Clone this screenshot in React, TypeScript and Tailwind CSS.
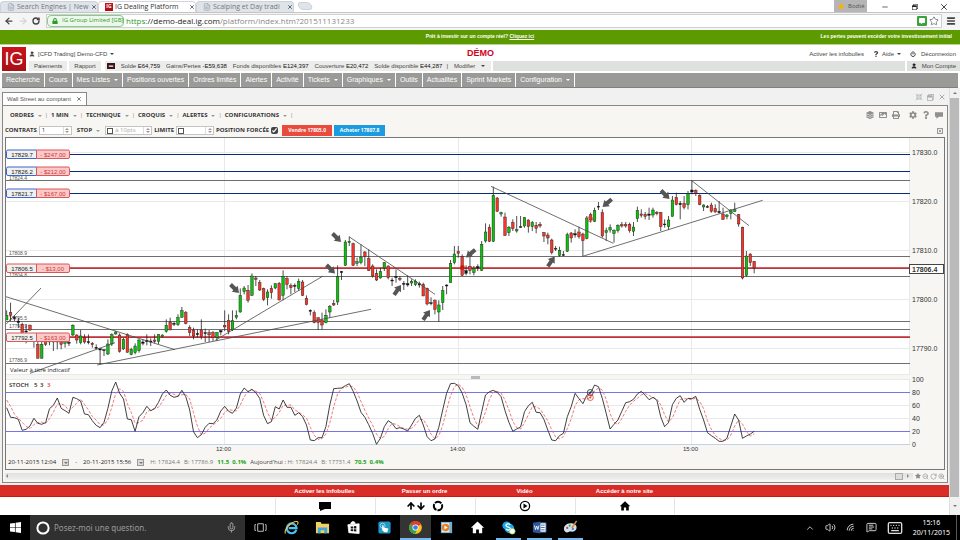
import type { ReactNode } from "react";
import {
  AlertTriangle,
  ArrowDown,
  ArrowLeft,
  ArrowRight,
  ArrowUp,
  ChevronUp,
  FileText,
  Keyboard,
  Menu,
  MessageSquareText,
  Mic,
  Minus,
  Power,
  RotateCw,
  Shrink,
  Star,
  User,
  Volume2,
  Wifi,
  X,
  ZoomIn,
  ZoomOut,
} from "lucide-react";
import { FaCog, FaCommentAlt, FaImage, FaLayerGroup, FaLock, FaPrint, FaQuestion, FaRegWindowRestore } from "react-icons/fa";

type Candle = [high: number, open: number, close: number, low: number, kind: "g" | "r" | "k"];

// One candle per minute, vertical positions in thirds of a pixel from the top of the plot.
const STEP = 11.68;
const FIRST_X = 2;

const candles: Candle[] = [
  [517, 532, 546, 546, "g"], [494, 524, 532, 549, "r"], [532, 538, 542, 549, "k"], [539, 549, 554, 569, "k"],
  [554, 559, 586, 589, "r"], [559, 579, 582, 616, "k"], [561, 561, 576, 579, "r"], [589, 604, 609, 629, "k"],
  [604, 619, 661, 661, "r"], [604, 619, 661, 661, "g"], [604, 609, 619, 624, "r"], [604, 608, 612, 622, "k"],
  [604, 609, 612, 639, "k"], [599, 609, 612, 634, "k"], [604, 609, 619, 634, "r"], [599, 610, 616, 629, "g"],
  [594, 613, 616, 624, "k"], [559, 562, 591, 594, "g"], [589, 591, 606, 617, "r"], [576, 594, 614, 619, "g"],
  [589, 598, 612, 617, "r"], [589, 611, 614, 619, "k"], [612, 616, 620, 629, "r"], [619, 628, 631, 634, "k"],
  [632, 632, 636, 679, "k"], [634, 635, 638, 654, "k"], [604, 618, 648, 651, "g"], [586, 590, 618, 624, "g"],
  [579, 582, 588, 590, "g"], [586, 591, 640, 644, "r"], [599, 604, 633, 636, "g"], [586, 590, 643, 644, "r"],
  [629, 634, 650, 652, "g"], [616, 624, 644, 649, "g"], [604, 606, 638, 644, "g"], [604, 612, 616, 622, "k"],
  [589, 607, 611, 622, "k"], [601, 609, 612, 624, "k"], [589, 606, 610, 616, "r"], [589, 590, 610, 618, "g"],
  [589, 591, 596, 599, "g"], [544, 562, 580, 584, "g"], [539, 552, 576, 576, "r"], [551, 556, 559, 564, "k"],
  [529, 539, 560, 564, "g"], [507, 518, 538, 539, "g"], [519, 524, 557, 559, "r"], [562, 569, 584, 594, "r"],
  [569, 576, 594, 604, "r"], [574, 586, 590, 599, "k"], [544, 576, 596, 604, "r"], [572, 584, 587, 612, "k"],
  [576, 584, 591, 612, "r"], [579, 584, 599, 609, "r"], [582, 584, 598, 609, "g"], [576, 578, 582, 592, "k"],
  [517, 562, 567, 579, "r"], [529, 548, 580, 589, "r"], [517, 548, 576, 579, "g"], [517, 532, 538, 544, "g"],
  [451, 472, 522, 524, "g"], [444, 450, 461, 469, "g"], [441, 457, 487, 494, "r"], [406, 414, 472, 474, "g"],
  [414, 420, 424, 444, "r"], [426, 434, 456, 459, "r"], [449, 452, 484, 489, "r"], [454, 462, 479, 502, "g"],
  [442, 451, 464, 482, "r"], [436, 437, 450, 454, "g"], [432, 436, 486, 487, "r"], [397, 415, 472, 487, "g"],
  [414, 422, 439, 454, "r"], [436, 442, 449, 469, "r"], [436, 442, 445, 462, "k"], [422, 430, 451, 459, "g"],
  [426, 432, 472, 474, "r"], [472, 481, 500, 502, "r"], [514, 517, 520, 532, "k"], [517, 524, 554, 556, "r"],
  [539, 539, 554, 576, "r"], [524, 546, 561, 574, "r"], [514, 532, 554, 556, "g"], [501, 505, 522, 539, "g"],
  [486, 496, 501, 504, "r"], [382, 416, 492, 501, "g"], [399, 400, 404, 426, "k"], [306, 312, 382, 384, "g"],
  [296, 310, 314, 324, "g"], [314, 317, 382, 384, "r"], [359, 371, 376, 384, "g"], [319, 358, 374, 379, "g"],
  [339, 342, 356, 384, "r"], [334, 362, 398, 399, "r"], [379, 384, 414, 419, "r"], [394, 407, 426, 429, "r"],
  [389, 400, 420, 422, "g"], [372, 374, 390, 399, "g"], [382, 384, 419, 424, "r"], [419, 426, 429, 444, "k"],
  [394, 415, 419, 434, "k"], [414, 421, 424, 429, "r"], [429, 436, 439, 456, "k"], [412, 437, 441, 446, "k"],
  [424, 431, 435, 444, "g"], [424, 430, 440, 444, "g"], [431, 437, 441, 449, "k"], [434, 439, 474, 474, "r"],
  [449, 451, 498, 502, "r"], [478, 494, 497, 502, "k"], [484, 488, 514, 529, "r"], [487, 501, 522, 552, "g"],
  [444, 458, 494, 516, "g"], [439, 441, 444, 469, "k"], [366, 376, 434, 434, "g"], [324, 348, 374, 379, "g"],
  [324, 341, 346, 359, "r"], [349, 356, 412, 414, "r"], [382, 398, 406, 412, "k"], [349, 385, 397, 409, "r"],
  [384, 391, 404, 412, "g"], [379, 386, 390, 399, "k"], [309, 319, 397, 399, "g"], [256, 282, 309, 314, "g"],
  [259, 268, 310, 312, "r"], [146, 172, 310, 312, "g"], [177, 180, 220, 222, "r"], [221, 224, 228, 236, "g"],
  [224, 237, 292, 294, "r"], [264, 268, 284, 294, "g"], [244, 254, 272, 279, "r"], [234, 275, 279, 284, "g"],
  [234, 266, 268, 269, "k"], [237, 239, 264, 269, "g"], [244, 246, 266, 284, "r"], [249, 254, 266, 279, "g"],
  [252, 262, 271, 286, "r"], [252, 259, 264, 269, "r"], [282, 284, 294, 312, "r"], [284, 291, 300, 319, "r"],
  [302, 306, 344, 349, "r"], [324, 331, 333, 339, "k"], [326, 337, 352, 356, "g"], [339, 350, 352, 354, "k"],
  [284, 290, 340, 342, "g"], [282, 285, 300, 314, "r"], [274, 287, 291, 299, "k"], [266, 282, 296, 302, "r"],
  [284, 288, 308, 354, "r"], [234, 240, 302, 304, "g"], [224, 230, 246, 254, "r"], [209, 218, 250, 252, "g"],
  [192, 205, 207, 216, "k"], [214, 224, 294, 299, "r"], [269, 278, 284, 309, "g"], [259, 269, 276, 284, "g"],
  [274, 277, 287, 314, "g"], [259, 262, 278, 284, "g"], [252, 260, 264, 269, "r"], [252, 260, 264, 269, "r"],
  [254, 259, 278, 284, "r"], [252, 267, 280, 294, "g"], [206, 217, 242, 252, "g"], [214, 228, 232, 239, "r"],
  [222, 229, 235, 244, "r"], [209, 228, 232, 246, "k"], [209, 216, 231, 239, "g"], [219, 223, 227, 232, "r"],
  [222, 224, 266, 279, "r"], [244, 258, 260, 269, "k"], [234, 246, 266, 276, "g"], [174, 186, 235, 236, "g"],
  [164, 178, 200, 202, "r"], [189, 196, 200, 244, "k"], [174, 196, 208, 214, "r"], [159, 167, 200, 214, "g"],
  [127, 156, 162, 169, "k"], [154, 157, 166, 174, "r"], [169, 172, 200, 202, "r"], [199, 201, 207, 219, "g"],
  [201, 206, 208, 209, "k"], [194, 201, 220, 224, "r"], [199, 212, 222, 224, "r"], [189, 220, 224, 226, "k"],
  [209, 228, 244, 246, "r"], [228, 231, 236, 244, "g"], [214, 216, 226, 244, "g"], [194, 215, 221, 222, "g"],
  [228, 230, 258, 266, "r"], [266, 268, 420, 424, "r"], [339, 354, 412, 416, "g"], [346, 348, 374, 384, "r"],
  [369, 370, 390, 406, "r"],
];

const stoch = [
  113, 142, 143, 148, 181, 178, 168, 145, 160, 163, 158, 116, 106, 84, 115, 122, 130, 82, 86, 93,
  132, 134, 152, 166, 173, 157, 115, 63, 36, 70, 87, 147, 149, 184, 140, 128, 109, 122, 116, 97,
  72, 60, 76, 82, 79, 61, 80, 120, 185, 203, 194, 172, 160, 161, 150, 123, 109, 124, 130, 114,
  72, 54, 65, 58, 68, 85, 136, 161, 155, 110, 117, 90, 112, 112, 136, 128, 140, 165, 210, 212,
  203, 203, 170, 105, 56, 55, 54, 47, 41, 64, 93, 127, 142, 164, 190, 223, 205, 170, 152, 160,
  176, 173, 177, 183, 165, 145, 136, 165, 200, 212, 207, 172, 120, 70, 41, 40, 47, 70, 104, 158,
  169, 178, 125, 75, 65, 61, 67, 80, 122, 157, 184, 177, 171, 125, 107, 97, 127, 128, 148, 180,
  210, 212, 197, 190, 140, 110, 70, 86, 101, 76, 68, 45, 50, 85, 130, 177, 163, 150, 124, 98,
  95, 88, 72, 64, 76, 89, 82, 91, 140, 170, 158, 104, 85, 77, 97, 85, 86, 79, 118, 150,
  188, 197, 205, 214, 214, 205, 168, 132, 150, 205, 198, 192, 184,
];

const signal = stoch.map((v, i) => (v + (stoch[i - 1] ?? 85) + (stoch[i - 2] ?? 72)) / 3);

const toPoints = (values: number[]) =>
  values.map((v, i) => `${((FIRST_X + i * STEP) / 3).toFixed(1)},${(v / 3 + 232).toFixed(1)}`).join(" ");

const trendLines = [
  [0, 158.7, 169, 211.7],
  [91, 227, 365, 171.3],
  [0, 186.3, 35, 150],
  [24, 235.3, 109, 204.7],
  [209.3, 202.3, 317, 138],
  [343, 98.7, 429, 156.3],
  [485, 48.3, 607.3, 105.3],
  [576.7, 118.3, 756.7, 62.3],
  [685.3, 42.3, 743, 87.7],
];

const arrows = [
  [233, 155, 45], [335, 104, 45], [329, 135.5, 45], [663.5, 61, 45],
  [395, 147, -55], [424, 172, -55], [548.7, 118.5, -55],
  [460, 119.5, 140], [596.5, 69, 140],
];

const positions = [
  { y: 16, price: "17829.7", pnl: "- $247,00", buy: true },
  { y: 33, price: "17826.2", pnl: "- $212,00", buy: true },
  { y: 55, price: "17821.7", pnl: "- $167,00", buy: true },
  { y: 130, price: "17806.5", pnl: "- $13,00", buy: false },
  { y: 199, price: "17792.5", pnl: "- $163,00", buy: false },
];

const levels = [
  { y: 42.5, label: "17824.4", ly: 42 },
  { y: 118.5, label: "17808.9", ly: 117 },
  { y: 138.5, label: "17804.8", ly: 139 },
  { y: 183.5, label: "17795.5", ly: 182 },
  { y: 191.5, label: "17793.9", ly: 190 },
  { y: 225.5, label: "17786.9", ly: 224 },
];

const priceTicks = [
  { y: 14.5, label: "17830.0" },
  { y: 63.5, label: "17820.0" },
  { y: 112.5, label: "17810.0" },
  { y: 161.5, label: "17800.0" },
  { y: 210.5, label: "17790.0" },
];

const stochTicks = [
  { y: 241.5, label: "100" },
  { y: 254.5, label: "80" },
  { y: 267.5, label: "60" },
  { y: 280.5, label: "40" },
  { y: 293.5, label: "20" },
  { y: 306.5, label: "0" },
];

const timeTicks = [
  { x: 218.5, label: "12:00" },
  { x: 452.5, label: "14:00" },
  { x: 685.5, label: "15:00" },
];

const candleFill = { g: "#0cc00c", r: "#f5362a", k: "#111111" };

const Chart = () => (
  <svg viewBox="0 0 938 316" className="block w-full bg-[#f7f6f3] font-['Liberation_Sans',sans-serif]">
    <rect width="904" height="236.5" fill="#fff" />
    <rect y="241.5" width="904" height="65" fill="#fff" />
    <g stroke="#e9e9e9">
      {priceTicks.map((t) => <line key={t.label} x1="0" x2="904" y1={t.y} y2={t.y} />)}
      {stochTicks.map((t) => <line key={t.label} x1="0" x2="904" y1={t.y} y2={t.y} />)}
      {timeTicks.map((t) => <path key={t.label} d={`M${t.x} 0V236M${t.x} 242V306`} />)}
      <path d="M0 236.5H904M903.5 0V236M903.5 242V306" />
    </g>
    <rect x="465" y="238" width="9" height="3" fill="#b9b9b9" />

    <g fontSize="5" fill="#555">
      {levels.map((l) => <text key={l.label} x="3" y={l.ly}>{l.label}</text>)}
    </g>
    <g stroke="#6f6f6f">
      {levels.map((l) => <line key={l.label} x1="0" x2="904" y1={l.y} y2={l.y} />)}
    </g>
    {positions.map((p) => (
      <g key={p.price}>
        <line x1="0" x2="904" y1={p.buy ? p.y + 0.5 : p.y} y2={p.buy ? p.y + 0.5 : p.y} stroke={p.buy ? "#0a2a7c" : "#de5a5f"} strokeWidth={p.buy ? 1 : 2} />
        {!p.buy && <line x1="0" x2="904" y1={p.y + 0.5} y2={p.y + 0.5} stroke="#94232a" strokeOpacity="0.6" />}
      </g>
    ))}

    {/* candles */}
    <g>
      {candles.map(([high, open, close, low, kind], i) => {
        const x = (FIRST_X + i * STEP) / 3;
        return (
          <g key={i}>
            <line x1={x} x2={x} y1={high / 3} y2={low / 3} stroke="#222" strokeWidth="0.8" />
            <rect x={x - 1.3} y={open / 3} width="2.6" height={Math.max((close - open) / 3, 0.8)} fill={candleFill[kind]} stroke="#1a1a1a" strokeWidth="0.4" />
          </g>
        );
      })}
    </g>
    <rect x="454.5" y="127.5" width="4" height="4" fill="#d21313" />
    <circle cx="584" cy="81" r="2.5" fill="none" stroke="#e8352b" strokeWidth="0.8" />

    <g stroke="#4a4a4a" strokeWidth="0.8">
      {trendLines.map(([x1, y1, x2, y2], i) => <line key={i} x1={x1} y1={y1} x2={x2} y2={y2} />)}
    </g>
    {arrows.map(([x, y, angle], i) => (
      <path key={i} d="M0 0 L-6 -4.2 V-2 H-12 V2 H-6 V4.2Z" fill="#555" transform={`translate(${x} ${y}) rotate(${angle})`} />
    ))}

    {positions.map((p) => (
      <g key={p.price} fontSize="6" textAnchor="middle">
        <path d={`M2 ${p.y - 4}H30.5V${p.y + 4.5}H2Q0.5 ${p.y + 4.5} 0.5 ${p.y + 3}V${p.y - 2.5}Q0.5 ${p.y - 4} 2 ${p.y - 4}Z`} fill="#f0f0ef" stroke={p.buy ? "#3d63d2" : "#e0565a"} />
        <path d={`M30.5 ${p.y - 4}H62Q63.5 ${p.y - 4} 63.5 ${p.y - 2.5}V${p.y + 3}Q63.5 ${p.y + 4.5} 62 ${p.y + 4.5}H30.5Z`} fill="#fcc9c9" stroke="#d9565a" />
        <text x="16" y={p.y + 2.5} fill="#222">{p.price}</text>
        <text x="47" y={p.y + 2.5} fill="#c93a3a">{p.pnl}</text>
      </g>
    ))}
    <text x="4" y="234" fontSize="6" fill="#222" className="font-['Open_Sans',sans-serif]">Valeur à titre indicatif</text>

    {/* stochastic */}
    <path d="M0 254.5H904M0 293.5H904" stroke="#7575e6" />
    <path d="M0 306.5H904" stroke="#c3d2e6" />
    <polyline points={toPoints(signal)} fill="none" stroke="#f06a6a" strokeWidth="0.9" strokeDasharray="3 1.6" />
    <polyline points={toPoints(stoch)} fill="none" stroke="#2b2b2b" strokeWidth="0.9" />
    <g fill="none" strokeWidth="0.8">
      <circle cx="584.3" cy="254.5" r="3" stroke="#222" />
      <circle cx="584.3" cy="259.5" r="3" stroke="#e8352b" />
    </g>
    <circle cx="584.3" cy="254.5" r="1" fill="#222" />
    <circle cx="584.3" cy="259.5" r="1" fill="#e8352b" />
    <rect x="1" y="242" width="46" height="10" fill="#fff" />
    <text x="3" y="249" fontSize="6" fontWeight="600" fill="#222" className="font-['Open_Sans',sans-serif]">
      STOCH <tspan x="28">5</tspan> <tspan x="34">3</tspan> <tspan x="41" fill="#e8352b">3</tspan>
    </text>

    <g fontSize="7" fill="#333">
      {priceTicks.map((t) => <text key={t.label} x="906" y={t.y + 2.5}>{t.label}</text>)}
      {stochTicks.map((t) => <text key={t.label} x="906" y={t.y + 2.5}>{t.label}</text>)}
    </g>
    <g fontSize="6" fill="#333" textAnchor="middle">
      {timeTicks.map((t) => <text key={t.label} x={t.x - 1} y="313">{t.label}</text>)}
    </g>
    <rect x="903.5" y="126.5" width="34" height="9" fill="#fff" stroke="#444" />
    <text x="906" y="133.5" fontSize="7" fontWeight="600" fill="#333">17806.4</text>
  </svg>
);

const Caret = () => <span className="inline-block border-x-2 border-t-2 border-x-transparent border-t-current" />;

const IgLogo = ({ className }: { className: string }) => (
  <span className={`flex shrink-0 items-center justify-center bg-gradient-to-b from-[#c9151b] to-[#a90f14] text-white ${className}`}>IG</span>
);

const browserTabs = [
  { title: "Search Engines | New", active: false },
  { title: "IG Dealing Platform", active: true },
  { title: "Scalping et Day tradi", active: false },
];

const Browser = () => (
  <div className="font-['Open_Sans','Noto_Sans',sans-serif]">
    <div className="flex h-3 items-end pt-px">
      {browserTabs.map((tab) => (
        <div key={tab.title} className={`relative flex h-full w-[98px] items-center rounded-t-sm border-x border-t pl-1.5 ${tab.active ? "z-10 border-gray-300 bg-white" : "border-[#cdd1d8] bg-[#dfe3ea]"}`}>
          {tab.active ? <IgLogo className="size-2 text-[5px] font-bold" /> : <FileText className="size-2 shrink-0 text-gray-400" />}
          <button className={`ml-0.5 w-[72px] text-left text-[7px] leading-3 whitespace-nowrap ${tab.active ? "text-[#333]" : "text-[#777]"}`}>{tab.title}</button>
          <button aria-label="Fermer l'onglet" className="ml-0.5"><X className="size-1.5 text-gray-700" strokeWidth={3} /></button>
        </div>
      ))}
      <button aria-label="Nouvel onglet" className="mb-0.5 ml-1 h-2 w-3.5 skew-x-[20deg] rounded-sm border border-[#cdd1d8] bg-[#dfe3ea]" />
      <div className="ml-auto flex h-full items-center text-[#222]">
        <div className="-mt-px flex h-3 w-[33px] items-center gap-1 bg-[#b5b5b5] pl-1 text-[6px] text-[#555]">
          <AlertTriangle className="size-1.5 fill-[#f8b500] text-[#f8b500]" />Bodté
        </div>
        <button aria-label="Réduire" className="px-3.5"><Minus className="size-2" /></button>
        <button aria-label="Restaurer" className="px-[9px]"><FaRegWindowRestore className="size-1.5" /></button>
        <button aria-label="Fermer" className="pr-[11px] pl-3"><X className="size-2.5" /></button>
      </div>
    </div>
    <div className="flex h-[18px] items-center border-t border-[#c4c4c4] bg-[#f5f5f5] pr-1 pb-0.5 text-[#444]">
      <button aria-label="Précédent" className="ml-1"><ArrowLeft className="size-2.5" strokeWidth={3} /></button>
      <button aria-label="Suivant" className="ml-1 text-gray-300"><ArrowRight className="size-2.5" strokeWidth={3} /></button>
      <button aria-label="Actualiser" className="ml-1"><RotateCw className="size-2" strokeWidth={4} /></button>
      <div className="ml-1.5 flex h-3.5 flex-1 items-center border border-[#d0d0d0] bg-white text-[8px]">
        <span className="flex h-3 w-[77px] shrink-0 items-center gap-1 rounded-sm border border-[#8cc98c] bg-[#edf8ed] pl-1 text-[6px] whitespace-nowrap text-[#2d9a2d]">
          <FaLock className="size-1.5 shrink-0" />IG Group Limited [GB]
        </span>
        <label htmlFor="url" className="pl-0.5 text-[8px] whitespace-nowrap text-[#222]"><span className="text-[#2d9a2d]">https:</span>//demo-deal.ig.com</label>
        <input id="url" className="min-w-0 flex-1 bg-transparent text-[8px] text-[#888] outline-none" defaultValue="/platform/index.htm?201511131233" />
        <span className="flex size-2.5 items-center justify-center rounded-[1px] bg-[#3da23d] text-white"><FaCommentAlt className="size-1.5" /></span>
        <Star className="mx-0.5 size-2.5 text-gray-500" />
      </div>
      <button aria-label="Menu" className="ml-1"><Menu className="size-2.5" strokeWidth={4} /></button>
    </div>
  </div>
);

const balances = [
  ["Solde", "E64,759"],
  ["Gains/Pertes", "-E59,638"],
  ["Fonds disponibles", "E124,397"],
  ["Couverture", "E20,472"],
  ["Solde disponible", "E44,287"],
];

const Header = () => (
  <header>
    <div className="flex h-[15px] items-center border-b border-[#b9d59a] bg-[#5c9a00] px-2 text-[5px] font-bold text-white">
      <span className="flex-1" />
      <p className="whitespace-nowrap">Prêt à investir sur un compte réel? <a href="#reel" className="underline">Cliquez ici</a></p>
      <p className="flex-1 text-right whitespace-nowrap">Les pertes peuvent excéder votre investissement initial</p>
    </div>
    <div className="flex h-[28px] items-center gap-[3px] pl-0.5 text-[6px] text-[#444]">
      <IgLogo className="size-6 text-[18px]" />
      <div className="flex-1">
        <div className="flex h-3.5 items-center pr-1">
          <button className="flex flex-1 items-center gap-[3px] whitespace-nowrap"><User className="size-1.5 fill-current" strokeWidth={3} />[CFD Trading] Demo-CFD <Caret /></button>
          <strong className="pr-6 text-[9px] text-[#d0021b]">DÉMO</strong>
          <div className="flex flex-1 items-center justify-end gap-[9px] whitespace-nowrap">
            <a href="#infobulles">Activer les infobulles</a>
            <button className="flex items-center gap-[3px]"><FaQuestion className="size-1.5" />Aide <Caret /></button>
            <button className="flex items-center gap-[5px]"><Power className="size-1.5" strokeWidth={4} />Déconnexion</button>
          </div>
        </div>
        <div className="flex h-2.5 gap-0.5 whitespace-nowrap">
          <a href="#paiements" className="bg-[#ececea] px-[5px] leading-[10px]">Paiements</a>
          <a href="#rapport" className="bg-[#ececea] px-[5px] leading-[10px]">Rapport</a>
          <div className="ml-0.5 flex items-center gap-1.5 bg-[#ececea] px-0.5">
            <button aria-label="Masquer le solde" className="flex h-1.5 w-2 items-center justify-center bg-[#3b1518] text-white"><Minus className="size-1.5" strokeWidth={5} /></button>
            {balances.map(([label, value]) => (
              <span key={label}>{label} <span className="text-[#111]">{value}</span></span>
            ))}
            <span className="-ml-0.5">|</span>
            <button className="flex items-center gap-1.5 pr-1">Modifier <Caret /></button>
          </div>
          <span className="flex-1 bg-[#dfe1de]" />
          <a href="#compte" className="flex items-center gap-[5px] bg-[#dfe1de] px-1"><User className="size-1.5 fill-current text-[#222]" strokeWidth={3} />Mon Compte</a>
        </div>
      </div>
    </div>
  </header>
);

const navItems = [
  { label: "Recherche" },
  { label: "Cours" },
  { label: "Mes Listes", menu: true },
  { label: "Positions ouvertes" },
  { label: "Ordres limités" },
  { label: "Alertes" },
  { label: "Activité" },
  { label: "Tickets", menu: true },
  { label: "Graphiques", menu: true },
  { label: "Outils" },
  { label: "Actualités" },
  { label: "Sprint Markets" },
  { label: "Configuration", menu: true },
];

const Nav = () => (
  <nav className="mr-0.5 ml-0.5 flex h-[15px] border-b border-[#808080] bg-[#9a9a99] text-[7px] font-medium text-white">
    {navItems.map((item) => (
      <a key={item.label} href={`#${item.label}`} className="flex items-center gap-1 border-r border-white px-1 whitespace-nowrap">
        {item.label}
        {item.menu && <Caret />}
      </a>
    ))}
  </nav>
);

const SpinBox = ({ id, width, value, tick, hint }: { id: string; width: string; value?: string; tick?: boolean; hint?: string }) => (
  <span className={`flex h-[9px] items-center border border-[#c4c4c4] bg-white ${width}`}>
    {tick && <input type="checkbox" aria-label={`Activer ${id}`} className="ml-px size-1.5 shrink-0 appearance-none border border-[#555] bg-white" />}
    <input id={id} className="w-0 min-w-0 flex-1 px-0.5 text-[6px] leading-[7px] font-normal text-[#333] outline-none placeholder:text-[#aaa]" defaultValue={value} placeholder={hint} />
    <button aria-label={`Modifier ${id}`} className="flex h-full w-2 flex-col items-center justify-center gap-px border-l border-[#ddd] text-[#999]">
      <span className="border-x-2 border-b-2 border-x-transparent border-b-current" />
      <Caret />
    </button>
  </span>
);

const chartMenus = ["ORDRES", "1 MIN", "TECHNIQUE", "CROQUIS", "ALERTES", "CONFIGURATIONS"];

const ChartToolbar = () => (
  <div className="font-['Open_Sans','Noto_Sans',sans-serif] text-[6px] font-bold text-[#333]">
    <div className="flex h-[18px] items-center gap-[3px] pl-[5px]">
      {chartMenus.map((menu) => (
        <span key={menu} className="flex items-center gap-[3px]">
          <button className="flex items-center gap-1 whitespace-nowrap">{menu} <span className="text-[#999]"><Caret /></span></button>
          <span className="font-normal text-[#888]">|</span>
        </span>
      ))}
      <div className="ml-auto flex items-center gap-[5px] pr-0.5 text-[#8f8f8d]">
        <button aria-label="Calques"><FaLayerGroup className="size-2" /></button>
        <button aria-label="Image"><FaImage className="size-2" /></button>
        <button aria-label="Imprimer" className="mr-1"><FaPrint className="size-2" /></button>
        <button aria-label="Réglages"><FaCog className="size-2" /></button>
        <button aria-label="Aide"><FaQuestion className="size-2" /></button>
        <button aria-label="Commentaire"><svg viewBox="0 0 12 10" className="h-[7px] w-2 fill-current"><path d="M0 0H12V7H6L2 10V7H0Z" /></svg></button>
      </div>
    </div>
    <div className="flex h-[13px] items-center gap-0.5">
      <label htmlFor="contrats">CONTRATS</label>
      <SpinBox id="contrats" width="w-[33px]" value="1" />
      <label htmlFor="stop" className="flex items-center gap-1 px-[3px]">STOP <span className="text-[#999]"><Caret /></span></label>
      <SpinBox id="stop" width="w-[47px]" tick hint="à 10pts" />
      <label htmlFor="limite">LIMITE</label>
      <SpinBox id="limite" width="w-[38px]" tick />
      <label htmlFor="forcee" className="whitespace-nowrap">POSITION FORCÉE</label>
      <input id="forcee" type="checkbox" defaultChecked className="size-[7px] accent-[#444]" />
      <button className="ml-0.5 h-[11px] w-[50px] bg-[#e94b3c] text-[5px] whitespace-nowrap text-white">Vendre 17805.0</button>
      <button className="h-[11px] w-[51px] bg-[#1b9be0] text-[5px] whitespace-nowrap text-white">Acheter 17807.8</button>
      <button aria-label="Fermer la barre" className="mr-0.5 ml-auto border border-[#999] text-[#888]"><X className="size-1" strokeWidth={5} /></button>
    </div>
  </div>
);

const Calendar = () => (
  <button aria-label="Choisir la date" className="mx-0.5 flex size-[7px] items-center justify-center border border-[#999] bg-[#ddd]"><Caret /></button>
);

const Stats = () => (
  <div className="flex h-[15px] items-center gap-1 bg-[#f7f6f3] pt-0.5 pl-0.5 font-['Open_Sans','Noto_Sans',sans-serif] text-[6px] whitespace-nowrap text-[#777]">
    <span className="text-[#222]">20-11-2015 12:04</span>
    <Calendar />
    <span className="pr-0.5 text-[#222]">-</span>
    <span className="text-[#222]">20-11-2015 15:56</span>
    <Calendar />
    <span>H: 17824.4</span>
    <span>B: 17786.9</span>
    <span className="font-bold text-[#19a519]">11.5 &nbsp;0.1%</span>
    <span><span className="text-[#444]">Aujourd'hui :</span> H: 17824.4</span>
    <span>B: 17731.4</span>
    <span className="font-bold text-[#19a519]">70.5 &nbsp;0.4%</span>
  </div>
);

const housePath = "M8 1.5L15 8.2H13V14H9.5V10H6.5V14H3V8.2H1Z";

const shortcuts: { label: string; icon: ReactNode }[] = [
  { label: "Activer les infobulles", icon: <svg viewBox="0 0 12 9" className="h-[9px] w-3"><path d="M0 0H12V7H6L1 9V7H0Z" /></svg> },
  {
    label: "Passer un ordre",
    icon: <><ArrowUp className="size-2.5" strokeWidth={4} /><ArrowDown className="size-2.5" strokeWidth={4} /><svg viewBox="0 0 12 12" className="ml-1.5 size-3" fill="none" stroke="currentColor" strokeWidth="2" strokeDasharray="7 1"><circle cx="6" cy="6" r="4.2" /></svg></>,
  },
  {
    label: "Vidéo",
    icon: <svg viewBox="0 0 12 12" className="size-3"><circle cx="6" cy="6" r="4.6" fill="none" stroke="currentColor" strokeWidth="1.3" /><path d="M4.5 3.6L8.5 6L4.5 8.4Z" /></svg>,
  },
  { label: "Accéder à notre site", icon: <svg viewBox="0 0 16 16" className="size-3"><path d={housePath} /></svg> },
];

const Shortcuts = () => (
  <footer className="text-[6px]">
    <div className="flex h-3 justify-center border-b border-[#d01414] bg-[#da2c27] font-bold text-white">
      {shortcuts.map((s) => <a key={s.label} href="#aide" className="w-[100px] text-center leading-3">{s.label}</a>)}
    </div>
    <div className="flex h-[18px] items-center justify-center bg-white text-black">
      {shortcuts.map((s) => (
        <div key={s.label} className="flex h-4 w-[100px] items-center justify-center border-l border-[#e4e4e4] fill-current last:border-r">{s.icon}</div>
      ))}
    </div>
  </footer>
);

const Workspace = () => (
  <div className="flex bg-[#f1f1f1]">
    <div className="min-w-0 flex-1">
      <div className="pr-px pl-0.5">
        <div className="flex h-[17px] items-end">
          <div className="flex h-[13px] items-center gap-[5px] border border-b-0 border-[#888] bg-white px-1 text-[6px] whitespace-nowrap text-[#555]">
            Wall Street au comptant
            <button aria-label="Fermer Wall Street"><X className="size-1.5" strokeWidth={3} /></button>
          </div>
          <div className="ml-auto flex items-center gap-1 pr-0.5 pb-1 text-[#aaa]">
            <button aria-label="Réduire"><Shrink className="size-2" /></button>
            <button aria-label="Agrandir"><FaRegWindowRestore className="size-[7px]" /></button>
            <button aria-label="Fermer"><X className="size-2" strokeWidth={3} /></button>
          </div>
        </div>
        <main className="border border-[#888] bg-[#f7f6f3] px-0.5">
          <ChartToolbar />
          <div className="border border-[#777]">
            <Chart />
            <Stats />
          </div>
          <div className="flex h-3 items-center gap-0.5">
            <div className="flex h-[7px] flex-1 items-center justify-between bg-gradient-to-b from-[#e0e0e0] to-[#f0f0ef] pl-px text-[#888]">
              <span className="border-y-2 border-r-2 border-y-transparent border-r-current" />
              <span className="flex h-full items-center gap-1">
                <span className="h-full w-2 border border-[#aaa] bg-[#dcdedc]" />
                <span className="mr-1 border-y-2 border-l-2 border-y-transparent border-l-current" />
              </span>
            </div>
            <div className="flex items-center gap-px text-[#888]">
              <Star className="size-1.5 fill-current" />
              <button aria-label="Zoom arrière"><ZoomOut className="size-[7px]" /></button>
              <button aria-label="Rétablir"><RotateCw className="size-[7px]" /></button>
              <button aria-label="Zoom avant"><ZoomIn className="size-[7px]" /></button>
            </div>
          </div>
        </main>
      </div>
      <div className="h-0.5" />
      <Shortcuts />
    </div>
    <div className="flex w-[11px] flex-col items-center border-l border-[#ddd] bg-[#f1f1f1] text-[#777]">
      <span className="my-1 border-x-2 border-b-2 border-x-transparent border-b-current" />
      <span className="w-full flex-1 border-r border-[#f1f1f1] bg-[#bababa]" />
      <span className="my-2 border-x-2 border-t-2 border-x-transparent border-t-current" />
    </div>
  </div>
);

const apps: { name: string; state?: "active" | "open"; icon: ReactNode }[] = [
  { name: "Affichage des tâches", icon: <path d="M5 4H11V12H5ZM3.2 5H2V11H3.2M12.8 5H14V11H12.8" fill="none" stroke="#ddd" strokeWidth="0.9" /> },
  {
    name: "Internet Explorer",
    icon: <><path d="M13.2 10.4A5.2 5.2 0 1 1 13.4 8.6H5" fill="none" stroke="#4cc3f1" strokeWidth="2.3" /><path d="M1.6 14.4C-.5 10.5 8 1 14 1.6C15.6 2.2 15 4 14 5" fill="none" stroke="#f5c93a" strokeWidth="1.2" /></>,
  },
  { name: "Explorateur", icon: <><path d="M1 2H6L7 4H15V14H1Z" fill="#f4cf62" /><path d="M3 8H13V14H10V11H6V14H3Z" fill="#3ba9e0" /></> },
  {
    name: "Store",
    icon: <><path d="M2 5L14 4V14.5L3 13.5ZM5 4.6C5 1 9.6 .4 9.8 4" fill="#fff" stroke="#fff" strokeWidth="0.8" /><path d="M5 7L7.5 6.8V9H5ZM8.3 6.7L11 6.5V9H8.3ZM5 9.8H7.5V12L5 11.8ZM8.3 9.8H11V12.3L8.3 12Z" fill="#111" /></>,
  },
  { name: "Tactile", icon: <><rect x="1.5" y="1.5" width="13" height="13" rx="2" fill="#2196c4" /><circle cx="6" cy="6" r="2.6" fill="none" stroke="#8fd9f5" /><path d="M5.5 5.5V11L8 13H11L12 9L7 8V5.5Z" fill="#fff" /></> },
  {
    name: "Chrome",
    state: "active",
    icon: <><circle cx="8" cy="8" r="6.8" fill="#fbc116" /><path d="M8 8L2.1 4.6A6.8 6.8 0 0 1 13.9 4.6Z" fill="#e33b2e" /><path d="M8 8L2.1 4.6A6.8 6.8 0 0 0 7.4 14.8L10 10Z" fill="#31a350" /><circle cx="8" cy="8" r="3.3" fill="#fff" /><circle cx="8" cy="8" r="2.5" fill="#3f7de8" /></>,
  },
  { name: "Lecteur multimédia", icon: <><rect x="2" y="2" width="12" height="12" fill="#6fb1d6" /><rect x="3" y="3" width="8" height="10" fill="#dfe9ef" /><circle cx="7" cy="8" r="4" fill="#ee7d1c" /><path d="M5.8 5.8L9.3 8L5.8 10.2Z" fill="#fff" /></> },
  { name: "Maison", icon: <path d={housePath} fill="#fff" /> },
  {
    name: "Skype",
    state: "open",
    icon: <><circle cx="6" cy="6" r="4.5" fill="#16a9e8" /><circle cx="9" cy="9" r="5" fill="#16a9e8" /><path d="M10 5C8.5 3.6 5 4 5.4 6C5.8 8 10 7.2 10 9.2C10 11.2 6 11 5.2 9.4" fill="none" stroke="#fff" strokeWidth="1.4" /><circle cx="12" cy="12" r="3" fill="#fff" stroke="#a8d64a" strokeWidth="0.8" /></>,
  },
  {
    name: "Word",
    state: "open",
    icon: <><path d="M8 3H15V13H8Z" fill="#fff" stroke="#2b579a" /><path d="M9.5 5.5H13.5M9.5 8H13.5M9.5 10.5H13.5" stroke="#2b579a" strokeWidth="0.9" /><path d="M1 3L9 1.5V14.5L1 13Z" fill="#2b579a" /><path d="M2.6 5.8L3.7 10.2L5 6.4L6.3 10.2L7.4 5.8" fill="none" stroke="#fff" strokeWidth="0.9" /></>,
  },
  {
    name: "Paint",
    state: "open",
    icon: <><path d="M8 3.5C3 3.5 1 7 1 9.5C1 12.5 4 14 6 12.8C7.5 12 8.5 12.5 10 12.5C13 12.5 14.5 10 14.5 8C14.5 5 11.5 3.5 8 3.5Z" fill="#cfe2ee" /><circle cx="4.5" cy="8.5" r="1.2" fill="#e33b2e" /><circle cx="7.2" cy="6" r="1.1" fill="#31a350" /><circle cx="10.5" cy="9.5" r="1.2" fill="#3f7de8" /><path d="M14.5 1L9.5 8.5" stroke="#d9862c" strokeWidth="1.6" /></>,
  },
];

const Taskbar = () => (
  <div className="flex h-[25px] items-stretch bg-black font-['Noto_Sans','Open_Sans',sans-serif] text-white">
    <button aria-label="Démarrer" className="flex w-[30px] items-center justify-center">
      <svg viewBox="0 0 10 10" className="size-[11px]" fill="#fff"><path d="M0 1.4L4.5 .8V4.7H0ZM5.1 .7L10 0V4.7H5.1ZM0 5.3H4.5V9.2L0 8.6ZM5.1 5.3H10V10L5.1 9.3Z" /></svg>
    </button>
    <div className="flex w-[215px] items-center bg-[#303030] px-1.5">
      <svg viewBox="0 0 14 14" className="size-3.5" fill="none" stroke="#fff" strokeWidth="2"><circle cx="7" cy="7" r="5.6" /></svg>
      <input aria-label="Recherche" placeholder="Posez-moi une question." className="ml-1 min-w-0 flex-1 bg-transparent text-[8px] outline-none placeholder:text-[#9a9a9a]" />
      <button aria-label="Micro" className="mr-0.5"><Mic className="size-[11px] text-[#aaa]" /></button>
    </div>
    {apps.map((app) => (
      <button
        key={app.name}
        aria-label={app.name}
        className={`flex w-[31px] items-center justify-center ${app.state === "active" ? "bg-[#343434]" : ""}`}
      >
        <span className={`flex h-full items-center border-y-2 border-t-transparent ${app.state ? "border-b-[#76b9ed]" : "border-b-transparent"} ${app.state === "active" ? "w-full justify-center" : "px-[5px]"}`}>
          <svg viewBox="0 0 16 16" className="size-[15px]">{app.icon}</svg>
        </span>
      </button>
    ))}
    <div className="ml-auto flex items-center gap-2.5 text-[#ddd]">
      <button aria-label="Icônes cachées"><ChevronUp className="size-2.5" /></button>
      <button aria-label="Volume"><Volume2 className="size-[11px]" /></button>
      <button aria-label="Réseau"><Wifi className="size-2.5 rotate-[-45deg]" /></button>
      <button aria-label="Notifications"><MessageSquareText className="size-[11px]" /></button>
      <button aria-label="Clavier"><Keyboard className="size-4" /></button>
      <div className="text-center text-[7px] leading-[10px] text-white">
        <div>15:16</div>
        <div>20/11/2015</div>
      </div>
      <span className="-ml-1 h-full w-1 border-l border-[#555]" />
    </div>
  </div>
);

const App = () => (
  <div className="min-h-screen bg-white font-['Liberation_Sans',Arial,sans-serif]">
    <Browser />
    <Header />
    <Nav />
    <Workspace />
    <Taskbar />
  </div>
);

export default App;
